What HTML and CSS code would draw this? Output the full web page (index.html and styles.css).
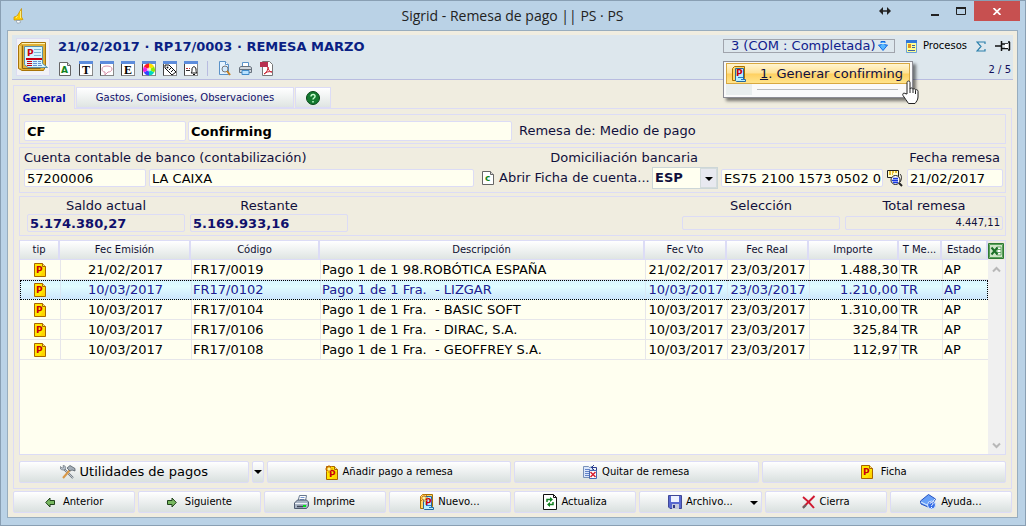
FILE: index.html
```html
<!DOCTYPE html>
<html lang="es">
<head>
<meta charset="utf-8">
<title>Sigrid - Remesa de pago</title>
<link rel="stylesheet" href="styles.css">
</head>
<body>
<svg class="sprite" aria-hidden="true">
  <symbol id="page" viewBox="0 0 12 14">
    <path d="M.5.5h8l3 3v10H.5z" fill="#ffe800" stroke="#a86400"/>
    <path d="M6 13h5V5z" fill="#ffd400"/>
    <path d="M8.500.5v3h3" fill="#f8d880" stroke="#a86400"/>
  </symbol>
  <symbol id="book" viewBox="0 0 14 16">
    <path d="M.5 2.500 2.500.5h10v12l-2 2H.5z" fill="#ffd768" stroke="#a87000"/>
    <path d="M3.500 2.500h8v11h2v2h-9l-1-1z" fill="#b8f0ff" stroke="#2468a0"/>
    <path d="M6 11.500h5M9 13.500h3" stroke="#2878c8"/>
  </symbol>
  <symbol id="frame" viewBox="0 0 14 15">
    <path d="M.5.5h13v14H.5z" fill="#fff" stroke="#444"/>
    <path d="M0 0h14v3H0z" fill="#5c8cdc"/>
    <path d="M13.500 3v11.500H1" fill="none" stroke="#888"/>
  </symbol>
  <symbol id="spark" viewBox="0 0 8 8">
    <path d="M4 0v8M0 4h8M1 1l6 6M7 1 1 7" stroke="#d87c10"/>
    <circle cx="4" cy="4" r="1.500" fill="#fff4a0"/>
  </symbol>
</svg>

<div class="window">
  <header class="titlebar">
    <svg class="app-icon" width="12" height="16" viewBox="0 0 12 16"><path d="M8.500.500v8.500l1.500 2.500-3 .5H1V9l3-1z" fill="#fc0" stroke="#c89000" stroke-width=".7"/><path d="M7.500 3v7M4.500 8 3 10" stroke="#fff080"/><path d="M3 12.500h4l.5 2-3 .8z" fill="#fff" stroke="#8897a5" stroke-width=".7"/></svg>
    <h1 class="window-title">Sigrid - Remesa de pago || PS · PS</h1>
    <div class="window-controls">
      <button class="win-btn resize" aria-label="Cambiar tamaño"><svg width="12" height="8" viewBox="0 0 12 8"><path d="M3 4h6" stroke="#222" stroke-width="1.500"/><path d="M4 0v8L0 4zM8 0v8l4-4z" fill="#222"/></svg></button>
      <button class="win-btn" aria-label="Minimizar"><svg width="10" height="10" viewBox="0 0 10 10"><path d="M1 8h8v2H1z" fill="#222"/></svg></button>
      <button class="win-btn" aria-label="Maximizar"><svg width="10" height="8" viewBox="0 0 10 8"><path d="M.5 1h9v6.500h-9z" fill="none" stroke="#222"/><path d="M0 0h10v2H0z" fill="#222"/></svg></button>
      <button class="win-btn close" aria-label="Cerrar"><svg width="8" height="7" viewBox="0 0 8 7"><path d="m.5 0 7 7M7.500 0l-7 7" stroke="#fff" stroke-width="1.700"/></svg></button>
    </div>
  </header>

  <main class="client">
    <section class="record">
      <div class="record-logo">
        <svg width="30" height="32" viewBox="0 0 30 32">
          <path d="M.5 4.500 3.500 1.500h24v24l-2 4H4l-3.500-2z" fill="#e0b038" stroke="#a87408"/>
          <path d="M2 5v22" stroke="#fcec9c"/><path d="M4 2.500h23" stroke="#fff4b0"/><path d="M4.500 4.500v23h18" fill="none" stroke="#8c6410"/>
          <path d="M6.500 5.500h18v17l5 4H10l-3.500-3z" fill="#d8f6ff" stroke="#5a90a8"/>
          <path d="M16 8.500h7M16 11.500h7M16 14.500h7" stroke="#80b8d4"/>
          <path d="M8 17h16v2H8zM9 20h5v1H9zM9 22h5v1H9zM9 24h5v1H9z" fill="#c80010"/>
          <path d="M15 20.500h8M15 22.500h8M15 24.500h9" stroke="#6890d0" stroke-dasharray="4 1"/>
          <text x="9" y="15" class="glyph glyph-red">P</text>
        </svg>
      </div>
      <div class="record-main">
        <h2 class="record-title">21/02/2017 · RP17/0003 · REMESA MARZO</h2>
        <div class="toolbar">
          <button class="tool" aria-label="Adjuntos"><svg width="12" height="14" viewBox="0 0 12 14"><path d="M.5.5h8l3 3v10H.5z" fill="#fff" stroke="#666"/><path d="M8.500.5v3h3" fill="#ddd" stroke="#666"/><text x="2" y="11" class="glyph glyph-green">A</text></svg></button>
          <button class="tool" aria-label="Texto"><svg width="14" height="15"><use href="#frame"/><text x="3" y="13" class="serif-glyph">T</text></svg></button>
          <button class="tool" aria-label="Comentario"><svg width="14" height="15"><use href="#frame"/><path d="M7 5c3 0 5 1 5 3s-2 3-4 3l-3 3V11C3 11 2 10 2 8s2-3 5-3z" fill="#fff" stroke="#d890a8"/></svg></button>
          <button class="tool" aria-label="Etiqueta E"><svg width="14" height="15"><use href="#frame"/><text x="3" y="13" class="serif-glyph">E</text></svg></button>
          <button class="tool" aria-label="Color"><svg width="14" height="15"><use href="#frame"/><path d="M7 8.500V2.500a6 6 0 0 1 5.200 3z" fill="#ffe000"/><path d="m7 8.500 5.200-3a6 6 0 0 1 0 6z" fill="#90e800"/><path d="m7 8.500 5.200 3a6 6 0 0 1-5.200 3z" fill="#00d8c0"/><path d="M7 8.500v6a6 6 0 0 1-5.200-3z" fill="#3048ff"/><path d="m7 8.500-5.200 3a6 6 0 0 1 0-6z" fill="#f020e0"/><path d="m7 8.500-5.200-3A6 6 0 0 1 7 2.500z" fill="#ff2020"/><circle cx="7" cy="8.500" r="2" fill="#fff" opacity=".7"/></svg></button>
          <button class="tool" aria-label="Etiquetas"><svg width="14" height="15"><use href="#frame"/><path d="M2 4h4l7 7-4 3-7-7z" fill="#fff" stroke="#111"/><circle cx="4.500" cy="6.500" r="1" fill="#111"/><path d="m6 9 3-3M8 11l3-3" stroke="#111"/></svg></button>
          <button class="tool" aria-label="Avisos"><svg width="14" height="15"><use href="#frame"/><path d="M2 7.500h4" stroke="#c03030" stroke-dasharray="2 1"/><path d="M2 9.500h4" stroke="#333"/><path d="M7 12c1-1 1-2 1-4s3-4 4 0c0 2 0 3 1 4zM9 13.500h2" fill="#fff" stroke="#111"/></svg></button>
          <span class="tool-sep"></span>
          <button class="tool" aria-label="Vista previa"><svg width="13" height="15" viewBox="0 0 13 15"><path d="M1.500.5h6l3 3v10h-9z" fill="#e4f3ff" stroke="#5a92c8"/><path d="M7.500.5v3h3" fill="#fff" stroke="#5a92c8"/><circle cx="7" cy="8" r="3" fill="#d0eaff" stroke="#777"/><path d="m9 10 3 4" stroke="#c88020" stroke-width="2"/></svg></button>
          <button class="tool" aria-label="Imprimir"><svg width="13" height="13" viewBox="0 0 13 13"><path d="M3.500 5V.5h6V5" fill="#fff" stroke="#5a92c8"/><path d="M.5 5.500 2 4.500h9l1.500 1v5H.5z" fill="#d0d6dc" stroke="#68727d"/><path d="M1 7.500h11" stroke="#68727d"/><path d="M3 8.500h7v4H3z" fill="#b8e2ff" stroke="#3f8ac8"/></svg></button>
          <button class="tool" aria-label="PDF"><svg width="13" height="15" viewBox="0 0 13 15"><path d="M2.500.5h7l3 3v11h-10z" fill="#fff" stroke="#777"/><path d="M0 1h8v5H0z" fill="#b83050"/><path d="M4 13c3-1 4-5 4-7 0 3 2 5 4 5-3-1-6 0-8 2z" fill="none" stroke="#c82030"/></svg></button>
        </div>
      </div>
      <div class="record-side">
        <div class="side-row">
          <div class="status-wrap">
            <button class="status" aria-haspopup="menu" aria-expanded="true">3 (COM : Completada)
              <svg width="10" height="10" viewBox="0 0 10 10"><path d="M3 .5h4V4h2.500L5 9.500.5 4H3z" fill="#58b8ff" stroke="#1468e0"/><path d="M1 2.500h8" stroke="#dceaf0"/></svg></button>
            <div class="menu" role="menu">
              <button class="menu-item" role="menuitem"><svg width="14" height="16"><use href="#book"/><text x="4" y="10" class="glyph glyph-red">P</text></svg><span><u>1</u>. Generar confirming</span></button>
              <div class="menu-foot"><span></span></div>
              <svg class="pointer" width="17" height="25" viewBox="0 0 17 25"><path d="M5 14V2.500c0-2 3-2 3 0V9c0-1.500 3-1.500 3 .5 0-1.500 2.500-1 2.500.8 0-1 2.500-.8 2.500 1V17c0 3-2 5-3 6.500H6.500C5 21 2.500 18 1 15.500c-1-2 1-3 2-2z" fill="#fff" stroke="#222"/><path d="M8 9v4M11 9.500V13M13.500 10.500V14" stroke="#222"/></svg>
            </div>
          </div>
          <button class="process"><svg width="11" height="13" viewBox="0 0 11 13"><path d="M.5.5h10v12H.5z" fill="#ffff90" stroke="#68a0d8"/><path d="M0 0h11v3H0z" fill="#3078d8"/><path d="M2 4h3v4H2z" fill="#e09020"/><path d="M6 5.500h3M6 7.500h3M2 10.500h7" stroke="#4060a0"/></svg>Procesos</button>
          <button class="plain" aria-label="Suma"><svg width="10" height="11" viewBox="0 0 10 11"><path d="M9 3V1H1l4 4.500L1 10h8V8" fill="none" stroke="#2c80ac" stroke-width="1.200"/></svg></button>
          <button class="plain" aria-label="Fijar"><svg width="16" height="10" viewBox="0 0 16 10"><path d="M0 5h6" stroke="#111" stroke-width="1.500"/><path d="M6.500 0v10M6.500 3H13M6.500 7.500H13" stroke="#111" stroke-width="1.500"/><path d="M10 3h4v4h-4z" fill="#fff"/><path d="M14.500 1v8M13 1h2M13 9h2" stroke="#111" stroke-width="1.500"/></svg></button>
        </div>
        <div class="counter">2 / 5</div>
      </div>
    </section>

    <nav class="tabs" role="tablist">
      <button class="tab active" role="tab" aria-selected="true">General</button>
      <button class="tab wide" role="tab">Gastos, Comisiones, Observaciones</button>
      <button class="tab help" role="tab" aria-label="Ayuda"><svg width="14" height="14" viewBox="0 0 14 14"><circle cx="7" cy="7" r="6.500" fill="#147a30" stroke="#064616"/><path d="M5 5.500c0-3 4.500-2.500 4 0C9 7 7 7 7 8.500M7 10v1.500" fill="none" stroke="#c8ffd0" stroke-width="1.500"/></svg></button>
    </nav>

    <section class="sheet">
      <div class="panel type-row">
        <input class="field strong" aria-label="Código de tipo" value="CF">
        <input class="field strong" aria-label="Tipo" value="Confirming">
        <span class="note">Remesa de: Medio de pago</span>
      </div>

      <div class="panel bank">
        <label class="lbl-account" for="account">Cuenta contable de banco (contabilización)</label>
        <label class="lbl-iban" for="iban">Domiciliación bancaria</label>
        <label class="lbl-date" for="date">Fecha remesa</label>
        <input class="field" id="account" value="57200006">
        <input class="field" aria-label="Banco" value="LA CAIXA">
        <button class="open-account"><svg width="12" height="14" viewBox="0 0 12 14"><path d="M.5.5h8l3 3v10H.5z" fill="#fff" stroke="#666"/><path d="M8.500.5v3h3" fill="#ddd" stroke="#666"/><text x="3" y="10" class="glyph glyph-green">c</text></svg>Abrir Ficha de cuenta...</button>
        <div class="country">
          <select aria-label="País"><option>ESP</option></select>
          <span class="country-arrow"></span>
        </div>
        <input class="field" id="iban" value="ES75 2100 1573 0502 0">
        <button class="plain" aria-label="Buscar"><svg width="17" height="17" viewBox="0 0 17 17"><path d="M.5.5h11v7H.5z" fill="#ffffd0" stroke="#222"/><path d="M2 2h8M2 4h4" stroke="#e0a800" stroke-width="1.500" stroke-dasharray="2 1"/><circle cx="8.500" cy="10" r="4.500" fill="#fff" stroke="#222"/><path d="M6 8.500h5M5 10.500h6M6 12.500h5" stroke="#1838e0" stroke-width="1.500"/><path d="m12 13 3 3" stroke="#222" stroke-width="2"/><path d="M13 4c2 2 2 5 0 8" fill="none" stroke="#222"/></svg></button>
        <input class="field" id="date" value="21/02/2017">
      </div>

      <div class="panel totals">
        <label class="total">Saldo actual<input class="field sum" readonly value="5.174.380,27"></label>
        <label class="total">Restante<input class="field sum" readonly value="5.169.933,16"></label>
        <span class="spacer"></span>
        <label class="total">Selección<input class="field small" readonly value=""></label>
        <label class="total">Total remesa<input class="field small" readonly value="4.447,11"></label>
      </div>

      <div class="grid">
        <div class="grid-body">
          <table>
            <colgroup><col class="c-tip"><col class="c-issue"><col class="c-code"><col><col class="c-date"><col class="c-date"><col class="c-amount"><col class="c-means"><col class="c-state"></colgroup>
            <thead><tr><th>tip</th><th>Fec Emisión</th><th>Código</th><th>Descripción</th><th>Fec Vto</th><th>Fec Real</th><th>Importe</th><th>T Me...</th><th>Estado</th></tr></thead>
            <tbody>
              <tr><td class="mid"><svg width="12" height="14"><use href="#page"/><text x="2" y="10" class="glyph glyph-red">P</text></svg></td><td class="mid">21/02/2017</td><td>FR17/0019</td><td>Pago 1 de 1 98.ROBÓTICA ESPAÑA</td><td class="mid">21/02/2017</td><td class="mid">23/03/2017</td><td class="num">1.488,30</td><td>TR</td><td>AP</td></tr>
              <tr class="selected"><td class="mid"><svg width="12" height="14"><use href="#page"/><text x="2" y="10" class="glyph glyph-red">P</text></svg></td><td class="mid">10/03/2017</td><td>FR17/0102</td><td>Pago 1 de 1 Fra.&nbsp; - LIZGAR</td><td class="mid">10/03/2017</td><td class="mid">23/03/2017</td><td class="num">1.210,00</td><td>TR</td><td>AP</td></tr>
              <tr><td class="mid"><svg width="12" height="14"><use href="#page"/><text x="2" y="10" class="glyph glyph-red">P</text></svg></td><td class="mid">10/03/2017</td><td>FR17/0104</td><td>Pago 1 de 1 Fra.&nbsp; - BASIC SOFT</td><td class="mid">10/03/2017</td><td class="mid">23/03/2017</td><td class="num">1.310,00</td><td>TR</td><td>AP</td></tr>
              <tr><td class="mid"><svg width="12" height="14"><use href="#page"/><text x="2" y="10" class="glyph glyph-red">P</text></svg></td><td class="mid">10/03/2017</td><td>FR17/0106</td><td>Pago 1 de 1 Fra.&nbsp; - DIRAC, S.A.</td><td class="mid">10/03/2017</td><td class="mid">23/03/2017</td><td class="num">325,84</td><td>TR</td><td>AP</td></tr>
              <tr><td class="mid"><svg width="12" height="14"><use href="#page"/><text x="2" y="10" class="glyph glyph-red">P</text></svg></td><td class="mid">10/03/2017</td><td>FR17/0108</td><td>Pago 1 de 1 Fra.&nbsp; - GEOFFREY S.A.</td><td class="mid">10/03/2017</td><td class="mid">23/03/2017</td><td class="num">112,97</td><td>TR</td><td>AP</td></tr>
            </tbody>
          </table>
        </div>
        <div class="grid-side">
          <button class="excel" aria-label="Exportar a Excel"><svg width="16" height="16" viewBox="0 0 16 16"><path d="M.5.5h15v15H.5z" fill="#d0e6c8" stroke="#2e7a34"/><path d="M1.500 1.500h13v13h-13z" fill="none" stroke="#58a058"/><path d="M9 4h4v8H9z" fill="#fff" stroke="#68a868"/><path d="M9 6.500h4M9 9.500h4" stroke="#68a868"/><path d="m3.500 4.500 6 7M9.500 4.500l-6 7" stroke="#1c7028" stroke-width="2"/></svg></button>
          <div class="scroll">
            <svg width="9" height="7" viewBox="0 0 9 7"><path d="M1 5.500 4.500 2 8 5.500" fill="none" stroke="#b8b8b8" stroke-width="2"/></svg>
            <svg width="9" height="7" viewBox="0 0 9 7"><path d="M1 1.500 4.500 5 8 1.500" fill="none" stroke="#b8b8b8" stroke-width="2"/></svg>
          </div>
        </div>
      </div>

      <div class="actions">
        <div class="split">
          <button class="btn big"><svg width="16" height="14" viewBox="0 0 16 14"><path d="m4 4 9 9" stroke="#68727c" stroke-width="2"/><path d="m4 4 9 9" stroke="#d8dee4" stroke-width=".8"/><path d="M.5 1.500 2 3l1.500-.5L3 .5c2 0 3 1 2.500 3S2 5.500.5 4z" fill="#b8c2cc" stroke="#5c6670" stroke-width=".6"/><path d="m3 13 7-8" stroke="#d89848" stroke-width="2"/><path d="m7 3 3-2.500 5 3V6l-3-1-2 1z" fill="#a4aeb8" stroke="#48515a" stroke-width=".7"/></svg>Utilidades de pagos</button>
          <button class="btn drop" aria-label="Más utilidades"><span class="caret"></span></button>
        </div>
        <button class="btn"><svg width="14" height="15" viewBox="0 0 14 15"><use href="#page" x="1" y="1" width="12" height="14"/><text x="4" y="12" class="glyph glyph-red">P</text><use href="#spark" width="8" height="8"/></svg>Añadir pago a remesa</button>
        <button class="btn"><svg width="15" height="14" viewBox="0 0 15 14"><path d="M.5 1.500h5l1 1 3-1v11h-9z" fill="#dbe7fa" stroke="#7890b8"/><path d="M2 4.500h5M2 6.500h5M2 8.500h4M2 10.500h4" stroke="#6484c8"/><path d="M6.500 5.500h7v8h-7z" fill="#fff" stroke="#4868b0"/><path d="m7.500 7 5 5M12.500 7l-5 5" stroke="#d82030" stroke-width="1.500"/><path d="M8 2.500h5.500v3M11 0 8.500 2.500 11 5" fill="none" stroke="#283c90"/></svg>Quitar de remesa</button>
        <button class="btn"><svg width="12" height="14"><use href="#page"/><text x="2" y="10" class="glyph glyph-red">P</text></svg><span></span>Ficha</button>
      </div>
    </section>

    <footer class="commands">
      <button class="btn"><svg width="10" height="11" viewBox="0 0 10 11"><path d="M.7 5.500 5 1v2.500h4.500v4H5V10z" fill="#78b860" stroke="#20421c"/></svg><span></span>Anterior</button>
      <button class="btn"><svg width="10" height="11" viewBox="0 0 10 11"><path d="M9.300 5.500 5 1v2.500H.5v4H5V10z" fill="#78b860" stroke="#20421c"/></svg><span></span>Siguiente</button>
      <button class="btn"><svg width="15" height="14" viewBox="0 0 15 14"><path d="M4 6 5.500.5h7L11.500 6" fill="#fff" stroke="#687890"/><path d="M6.500 2.500h4M6 4.500h4" stroke="#7898d0"/><path d="m.5 8 3-3h9l2 2v4l-2 2.500H.5z" fill="#a8b4c4" stroke="#505c70"/><path d="M1 8.500h12" stroke="#f0f4f8"/><path d="M3 11.500h6" stroke="#404858" stroke-width="1.500"/><path d="M9 10h3v2H9z" fill="#00e018"/></svg>Imprime</button>
      <button class="btn"><svg width="14" height="16" viewBox="0 0 14 16"><use href="#book" width="14" height="16"/><text x="5" y="11" class="glyph glyph-red">P</text><use href="#spark" width="8" height="8"/></svg>Nuevo...</button>
      <button class="btn"><svg width="14" height="16" viewBox="0 0 14 16"><path d="M.5.5h10l3 3v12H.5z" fill="#fff" stroke="#111"/><path d="M10.500.5v3h3" fill="none" stroke="#111"/><path d="M4 8V5.500h4.500M10 8v2.500H5.500" fill="none" stroke="#108020" stroke-width="1.500"/><path d="m7 3 3 2.500L7 8zM7 8l-3 2.500L7 13z" fill="#108020"/></svg>Actualiza</button>
      <button class="btn"><svg width="14" height="14" viewBox="0 0 14 14"><path d="M.5.5h13v13H2l-1.500-1.500z" fill="#5868d0" stroke="#404898"/><path d="M3 1h8v6H3z" fill="#eef2ff"/><path d="M4 9h7v5H4z" fill="#c4c8dc"/><path d="M5 10h2v3H5z" fill="#303880"/></svg>Archivo...<span class="caret file-caret"></span></button>
      <button class="btn"><svg width="14" height="14" viewBox="0 0 14 14"><path d="M1 2c4 3 7 6 11 11" fill="none" stroke="#d01830" stroke-width="2"/><path d="M12.500 1 1 12.500" stroke="#d01830" stroke-width="2"/><path d="m1 13 3-3" stroke="#666" stroke-width="2"/></svg>Cierra</button>
      <button class="btn"><svg width="17" height="16" viewBox="0 0 17 16"><path d="m.5 7 8-6.500 7 4.500-5 9L1 10z" fill="#68a0f8" stroke="#2450c0"/><path d="m1 8 8 4 6-7" fill="none" stroke="#e0f0ff"/><circle cx="11.500" cy="11" r="4" fill="#3870e8" stroke="#d8e8ff"/><path d="M10 9.800c.2-2.300 3.500-1.500 3 .2-.3 1-1.500.8-1.500 2M11.500 13v1" fill="none" stroke="#fff"/></svg>Ayuda...</button>
    </footer>
  </main>
</div>
</body>
</html>
```
FILE: styles.css
```css
* { box-sizing: border-box; }

body {
  margin: 0;
  font: 13px/16px "DejaVu Sans", Verdana, sans-serif;
  color: #000;
}

button, input, select { font: inherit; color: inherit; margin: 0; }
button { background: none; border: 0; padding: 0; white-space: nowrap; }
svg { display: block; flex: none; }

.sprite { position: absolute; width: 0; height: 0; }
.glyph { font: bold 9px "DejaVu Sans", sans-serif; }
.glyph-red { fill: #c8000c; }
.glyph-green { fill: #128420; }
.serif-glyph { font: bold 12px "Liberation Serif", serif; fill: #000; }

.window {
  display: flex;
  flex-direction: column;
  min-height: 100vh;
  padding: 0 7px 7px 6px;
  background: #bad2e6;
  border: 1px solid #899fb3;
}

.titlebar {
  display: grid;
  grid-template-columns: 1fr auto 1fr;
  align-items: center;
  height: 29px;
}
.app-icon { margin-left: 6px; }
.window-title {
  margin: 0;
  font: 14px/20px "Open Sans", "Noto Sans", sans-serif;
  color: #222;
}
.window-controls { display: flex; justify-content: flex-end; align-self: start; margin-right: -2px; }
.win-btn { display: flex; align-items: center; justify-content: center; width: 26px; height: 20px; }
.resize { margin-right: 24px; }
.close { width: 46px; background: #c75050; }

.client {
  flex: 1;
  display: flex;
  flex-direction: column;
  padding: 4px;
  background: #f0ede0;
  border: 1px solid #98adbe;
}

.record {
  display: flex;
  align-items: flex-start;
  height: 45px;
  padding: 3px 2px 0 4px;
  background: #dde7ed;
  border-bottom: 1px solid #b8bce0;
}
.record-logo { padding: 2px 1px; background: #f2f2f6; border: 1px solid #dcdcf2; }
.record-main { flex: 1; padding-left: 8px; }
.record-title { margin: 0; font-size: 13px; line-height: 18px; color: #0a1f84; }
.toolbar { display: flex; align-items: center; gap: 7px; margin-top: 5px; }
.tool { display: flex; justify-content: center; width: 14px; }
.tool-sep { width: 1px; height: 15px; margin: 0 2px; background: #b8bce0; }

.record-side { color: #10105c; }
.side-row { display: flex; align-items: center; gap: 9px; }
.status-wrap { position: relative; }
.status {
  display: flex;
  align-items: center;
  justify-content: space-between;
  width: 172px;
  height: 14px;
  padding: 0 6px 0 7px;
  border: 1px solid #a0a4ac;
  color: #10208c;
}
.process { display: flex; align-items: center; gap: 6px; margin-left: 2px; font-size: 10px; color: #000; }
.plain { display: flex; align-items: center; justify-content: center; }
.counter { margin-top: 9px; text-align: right; font-size: 10px; line-height: 14px; }

.menu {
  position: absolute;
  z-index: 2;
  top: 22px;
  left: 0;
  width: 190px;
  padding: 1px 2px 2px;
  background: #fafafa;
  border: 1px solid #8c8c94;
  box-shadow: 3px 3px 3px rgba(0, 0, 0, .5);
}
.menu-item {
  display: flex;
  align-items: center;
  gap: 14px;
  width: 100%;
  height: 21px;
  padding-left: 5px;
  border: 1px solid #d8a840;
  background: linear-gradient(#fff4d0, #ffe296 48%, #ffd060 52%, #ffe48c);
  color: #101040;
}
.menu-foot { display: flex; align-items: center; height: 11px; padding-left: 26px; background: linear-gradient(90deg, #e9eeee 26px, #fafafa 26px); }
.menu-foot span { flex: 1; height: 1px; margin: 0 12px 0 5px; background: #b8bcc0; }
.pointer { position: absolute; left: 178px; top: 18px; }

.tabs { display: flex; align-items: flex-end; gap: 1px; height: 28px; padding-left: 1px; }
.tab {
  height: 21px;
  font-size: 10px;
  color: #10106c;
  border: 1px solid #dcdcf6;
  background: linear-gradient(#fff, #dfe5e3);
}
.tab.active {
  position: relative;
  z-index: 1;
  height: 24px;
  width: 62px;
  margin-bottom: -1px;
  background: #f0ede0;
  border-bottom: 0;
  font: bold 11px/16px "Open Sans", "Noto Sans", sans-serif;
  color: #0000a8;
}
.tab.wide { width: 218px; }
.tab.help { width: 36px; display: flex; align-items: center; justify-content: center; }

.sheet {
  flex: 1;
  display: flex;
  flex-direction: column;
  gap: 3px;
  margin: 0 1px 2px;
  padding: 5px;
  border: 1px solid #dcdcf6;
}

.panel { border: 1px solid #dcdcf6; color: #10103c; padding: 0 2px 0 4px; }
.field {
  min-width: 0;
  width: 100%;
  height: 18px;
  padding: 0 0 0 2px;
  background: #fffff0;
  border: 1px solid #dcdcf6;
  border-radius: 2px;
  color: #000;
}
.strong { font-weight: bold; height: 20px; }

.type-row {
  display: grid;
  grid-template-columns: 162px 324px 1fr;
  align-items: center;
  column-gap: 2px;
  height: 30px;
  padding-top: 4px;
}
.note { padding-left: 5px; }

.bank {
  display: grid;
  grid-template-columns: 122px 1fr 172px 66px 162px 18px 96px;
  grid-template-rows: 19px 22px;
  align-items: center;
  column-gap: 3px;
  height: 46px;
}
.lbl-account { grid-column: 1 / 3; }
.lbl-iban { grid-column: 3 / 5; text-align: right; padding-right: 20px; }
.lbl-date { grid-column: 6 / 8; text-align: right; padding-right: 3px; }
.open-account { display: flex; align-items: center; gap: 5px; padding-left: 5px; }
.country { position: relative; display: flex; }
.country select {
  appearance: none;
  width: 100%;
  height: 22px;
  padding: 0 20px 0 2px;
  background: #fffff0;
  border: 1px solid #ccd6d8;
  border-radius: 0;
  font-weight: bold;
}
.country-arrow {
  position: absolute;
  inset: 1px 1px 1px auto;
  width: 17px;
  background: #e8e9f0;
  border: 1px solid #d4dcdc;
  pointer-events: none;
}
.country-arrow::after {
  content: "";
  position: absolute;
  left: 4px;
  top: 8px;
  border: 4px solid transparent;
  border-top-color: #000;
  border-bottom: 0;
}

.totals { display: flex; gap: 5px; height: 40px; padding: 1px 2px 0 7px; margin-bottom: 1px; }
.spacer { flex: 1; }
.total { width: 158px; text-align: center; }
.total .field { display: block; background: #f0ede0; }
.total .sum { font-weight: bold; color: #10106c; }
.total .small { height: 14px; margin-top: 2px; padding-right: 2px; font-size: 10px; text-align: right; color: #10103c; }

.grid {
  flex: 1;
  display: flex;
  min-height: 120px;
  margin-bottom: 3px;
  background: #fffff0;
  border: 1px solid #dcdcf6;
}
.grid-body { flex: 1; min-width: 0; }
.grid-side { display: flex; flex-direction: column; width: 17px; }
.excel { height: 19px; background: #f0ede0; }
.scroll {
  flex: 1;
  display: flex;
  flex-direction: column;
  align-items: center;
  justify-content: space-between;
  padding: 6px 0 5px;
  background: #f0f0f0;
}

table { width: 100%; table-layout: fixed; border-collapse: separate; border-spacing: 0; }
.c-tip { width: 40px; }
.c-issue { width: 131px; }
.c-code { width: 129px; }
.c-date { width: 82px; }
.c-amount { width: 90px; }
.c-means { width: 43px; }
.c-state { width: 46px; }
th {
  height: 19px;
  padding: 0;
  font-size: 10px;
  font-weight: normal;
  line-height: 16px;
  color: #101030;
  background: linear-gradient(#fff, #dfe5e3);
  border-right: 2px solid #dcdcf6;
  border-bottom: 1px solid #dcdcf6;
}
td {
  height: 20px;
  padding: 2px 2px 1px 1px;
  line-height: 16px;
  white-space: nowrap;
  overflow: hidden;
  border-left: 1px solid #e6e6ea;
  border-bottom: 1px solid #e6e6ea;
}
td:first-child { border-left: 0; }
td svg { margin: 0 auto; }
.mid { text-align: center; }
.num { text-align: right; padding-right: 1px; }
.selected td {
  padding-top: 1px;
  color: #202090;
  background: linear-gradient(#d8f6ff, #e0fcff 30%, #cce6fc);
  border-top: 1px dotted #000;
  border-bottom: 1px dotted #000;
  border-left-color: #d8e8f4;
}
.selected td:first-child { border-left: 1px dotted #000; }
.selected td:last-child { border-right: 1px dotted #000; }

.btn {
  flex: 1;
  position: relative;
  display: flex;
  align-items: center;
  justify-content: center;
  gap: 4px;
  height: 22px;
  font-size: 10px;
  color: #000;
  background: linear-gradient(#fff, #d9e0df);
  border: 1px solid #dcdcf6;
  border-radius: 2px;
}
.big { font-size: 13px; }
.actions { display: grid; grid-template-columns: repeat(4, 1fr); gap: 3px; }
.split { display: flex; gap: 3px; }
.drop { flex: 0 0 12px; }
.caret { border: 4px solid transparent; border-top-color: #000; border-bottom: 0; }
.file-caret { position: absolute; right: 3px; top: 9px; }
.commands { display: grid; grid-template-columns: repeat(8, 1fr); gap: 3px; padding: 0 1px; }
```
